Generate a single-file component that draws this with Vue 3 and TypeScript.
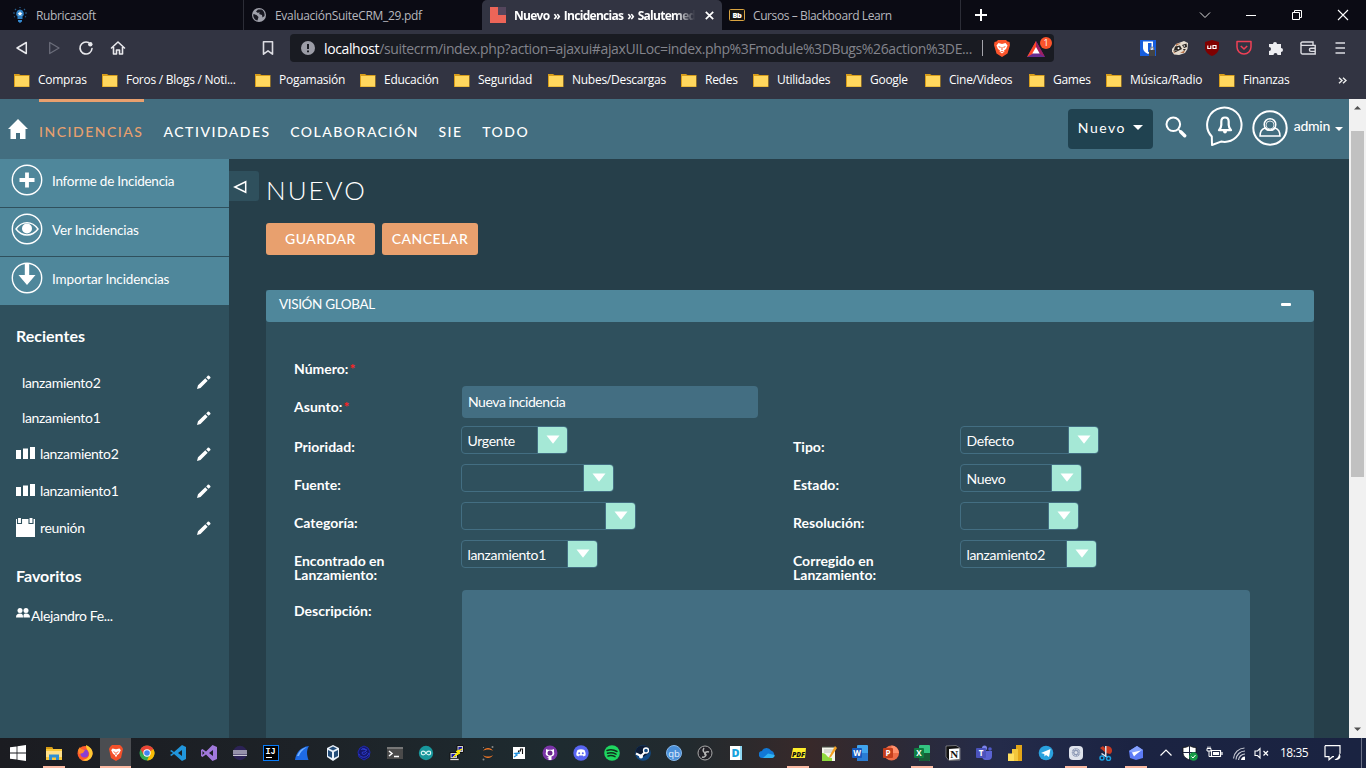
<script setup lang="ts">
interface Bookmark { name: string; w: number }
interface Recent { name: string; icon: string; h: number }
interface Field { label: string; value: string; w: number }
interface TaskIcon { id: string; art: string; state?: string; narrow?: boolean }

const bookmarks: Bookmark[] = [
  { name: 'Compras', w: 88 },
  { name: 'Foros / Blogs / Noti...', w: 153 },
  { name: 'Pogamasión', w: 105 },
  { name: 'Educación', w: 94 },
  { name: 'Seguridad', w: 94 },
  { name: 'Nubes/Descargas', w: 133 },
  { name: 'Redes', w: 72 },
  { name: 'Utilidades', w: 93 },
  { name: 'Google', w: 79 },
  { name: 'Cine/Videos', w: 104 },
  { name: 'Games', w: 77 },
  { name: 'Música/Radio', w: 113 },
  { name: 'Finanzas', w: 90 },
]

const recents: Recent[] = [
  { name: 'lanzamiento2', icon: '', h: 36 },
  { name: 'lanzamiento1', icon: '', h: 35 },
  { name: 'lanzamiento2', icon: 'bars', h: 37 },
  { name: 'lanzamiento1', icon: 'bars', h: 37 },
  { name: 'reunión', icon: 'cal', h: 37 },
]

const pairs: [Field, Field][] = [
  [{ label: 'Prioridad:', value: 'Urgente', w: 107 }, { label: 'Tipo:', value: 'Defecto', w: 139 }],
  [{ label: 'Fuente:', value: '', w: 153 }, { label: 'Estado:', value: 'Nuevo', w: 122 }],
  [{ label: 'Categoría:', value: '', w: 175 }, { label: 'Resolución:', value: '', w: 119 }],
  [{ label: 'Encontrado en Lanzamiento:', value: 'lanzamiento1', w: 137 }, { label: 'Corregido en Lanzamiento:', value: 'lanzamiento2', w: 137 }],
]

const office = (dark: string, mid: string, light: string, letter: string) =>
  `<rect x="5" y="0" width="11" height="16" rx="1" fill="${light}"/><path d="M5 8h11v7a1 1 0 0 1-1 1H6a1 1 0 0 1-1-1z" fill="${mid}"/><rect x="0" y="3" width="10" height="10" rx="1" fill="${dark}"/><text x="5" y="11" text-anchor="middle" font-family="Open Sans, sans-serif" font-weight="700" font-size="8" fill="#fff">${letter}</text>`

const tasks: TaskIcon[] = [
  { id: 'explorer', state: 'open', art: '<path d="M0 2h6l1 2h9v11H0z" fill="#f9c73a"/><path d="M0 2h6l1 2H0z" fill="#d69a14"/><path d="M0 6h16v6H0z" fill="#ffe08a"/><path d="M3 15V9.500h10V15h-3v-2.500H6V15z" fill="#2f8fd3"/>' },
  { id: 'firefox', art: '<circle cx="8" cy="8.500" r="7.500" fill="#ff5a2c"/><path d="M9 0c5 2 7.500 6 6.400 10C14 15 9 17 4.500 15 9 15 13 12 12 8 11.500 6 9 4 9 0z" fill="#ffc933"/><circle cx="7.500" cy="8.500" r="4" fill="#8a3fd6"/><path d="M1 5l2-3 1 2 4 1-2 3-4 1z" fill="#ff8a2a"/>' },
  { id: 'brave', state: 'active', art: '<path d="M4 0h8l2 2 1 2-2 9-5 3-5-3L1 4l1-2z" fill="#f4502a"/><path d="M4.500 3.500l3.500.8 3.500-.8 1.300 1.800-1.800 3.400-1.800 1.200L8 12.500l-1.200-2.600L5 8.700 3.200 5.300z" fill="#fff"/><path d="M5 6l2 1-.5 1zm6 0L9 7l.5 1zM7.500 7h1v3h-1z" fill="#f4502a"/>' },
  { id: 'chrome', art: '<circle cx="8" cy="8" r="7.500" fill="#34a853"/><path d="M1.500 4.200A7.500 7.500 0 0 1 14.500 4.200L8 8z" fill="#ea4335"/><path d="M14.500 4.200A7.500 7.500 0 0 1 8 15.500L11 9 8 4.200z" fill="#fbbc05"/><path d="M1.500 4.200 8 4.200 14.500 4.200 8 8 4.700 10z" fill="#ea4335"/><circle cx="8" cy="8" r="3.700" fill="#fff"/><circle cx="8" cy="8" r="2.800" fill="#4285f4"/>' },
  { id: 'code', art: '<path d="M12 0l4 2v12l-4 2-8-7-2.500 2L0 10l3-2-3-2 1.500-1L4 7zM12 5L8 8l4 3z" fill="#2196dc" fill-rule="evenodd"/>' },
  { id: 'vs', art: '<path d="M11.500 0L16 2v12l-4.500 2L5 9.500 1.500 12 0 11V5l1.500-1L5 6.500zM12 5L8 8l4 3zM1.500 6v4L3.500 8z" fill="#a179dc" fill-rule="evenodd"/>' },
  { id: 'eclipse', art: '<circle cx="8" cy="8" r="7.200" fill="#2c2255"/><path d="M1 5.500h14v1H1zm0 2h14v1.100H1zm0 2.200h14v1H1z" fill="#fff"/>' },
  { id: 'intellij', art: '<rect x=".5" y=".5" width="15" height="15" fill="#000" stroke="#087cfa"/><text x="2.500" y="9" font-family="Liberation Mono, monospace" font-weight="700" font-size="8.500" fill="#fff">IJ</text><path d="M3 12h6v1H3z" fill="#fff"/>' },
  { id: 'shark', art: '<path d="M1 15C2 8 6 2 15 1c-3 5-2 9-.5 14z" fill="#1d6ae5"/><path d="M3 11c2-5 5-8 10-9-5 3-7 6-8 9z" fill="#75b4ff"/>' },
  { id: 'vbox', art: '<path d="M8 0l6 3v9l-6 4-6-4V3z" fill="#e9f1fa"/><path d="M8 1.500l4 2-4 2-4-2zM3 5l4 2v6L3 11zm10 0L9 7v6l4-2z" fill="#234d79"/>' },
  { id: 'rose', art: '<path d="M8 1l4 2 2 4-1 5-5 3-5-3-1-5 2-4z" fill="#14176b" stroke="#2028b0"/><path d="M5 5c2-3 6-1 5 1s-4 0-4 2 4 2 5-1M3 9c1 4 8 5 10-1M6 4l5 1" fill="none" stroke="#3040d8" stroke-width=".9"/>' },
  { id: 'terminal', art: '<rect y="2" width="16" height="12" fill="#4a4a4a"/><path d="M0 2h16v2H0z" fill="#777"/><path d="M2 6l3 2.500L2 11M7 11.500h5" fill="none" stroke="#fff" stroke-width="1.500"/>' },
  { id: 'arduino', art: '<circle cx="8" cy="8" r="7.200" fill="#18979c"/><path d="M8 8C6.500 5.500 3.300 5.500 3.300 8s3.200 2.500 4.700 0 4.700-2.500 4.700 0S9.500 10.500 8 8z" fill="none" stroke="#d8f5f4" stroke-width="1.200"/>' },
  { id: 'putty', art: '<path d="M8 .5h6.500v7H8z" fill="#ccc" stroke="#111"/><path d="M1 7.500h7.500v6H1z" fill="#ccc" stroke="#111"/><path d="M9.500 2h3.500v3.500H9.500zM2.500 9h4v3h-4z" fill="#1a1ab0"/><path d="M1 13.500h9v2H1z" fill="#ddd" stroke="#111" stroke-width=".6"/><path d="M13 4L7 6.500l2 1L4 12l7-4-2-1z" fill="#ffee00" stroke="#ffee00"/>' },
  { id: 'jupyter', art: '<path d="M3 6c2-4 8-4 10 0-3-2-7-2-10 0zm0 4c2 4 8 4 10 0-3 2-7 2-10 0z" fill="#f37726"/><circle cx="12.500" cy="2" r="1" fill="#888"/><circle cx="3.500" cy="14.500" r="1" fill="#888"/><circle cx="3.500" cy="2.500" r=".6" fill="#888"/>' },
  { id: 'robot', art: '<rect x="2" y="2" width="12" height="12" fill="#fff"/><path d="M7.500 7.500V6h2V4h2v5" fill="none" stroke="#111" stroke-width="1.100"/><path d="M3 12l3-2-2-1.500 5-.5" fill="none" stroke="#1b90e0" stroke-width="1.300"/>' },
  { id: 'github', art: '<circle cx="8" cy="8" r="7.500" fill="#7b35a8"/><path d="M4 4l2 .8h4L12 4v3c1 3-1 4-2.500 4.500V15h-3v-2l-2-1 2 .2v-1C4 11 3 9 4 7z" fill="#fff"/><circle cx="8" cy="8" r="2.500" fill="#6a278e"/>' },
  { id: 'discord', art: '<circle cx="8" cy="8" r="7.700" fill="#5865f2"/><path d="M4.500 5c2-1 5-1 7 0 1 2 1.500 4 1 5.500L10.500 11.500 10 10.500H6l-.5 1-2-1C3 9 3.500 7 4.500 5z" fill="#fff"/><circle cx="6.200" cy="8.200" r="1" fill="#5865f2"/><circle cx="9.800" cy="8.200" r="1" fill="#5865f2"/>' },
  { id: 'spotify', art: '<circle cx="8" cy="8" r="7.800" fill="#1ed760"/><path d="M3 5.500c3-1 7-.7 10 1M3.500 8.300c3-.8 6-.5 8.500.8M4 11c2.500-.7 5-.4 7 .7" fill="none" stroke="#10301c" stroke-width="1.500" stroke-linecap="round"/>' },
  { id: 'steam', art: '<circle cx="8" cy="8" r="7.800" fill="#124b86"/><path d="M.5 6A7.800 7.800 0 0 1 15 5l-1 3-6 4-7-3z" fill="#0d1c36"/><path d="M1 8.500l5 2.500L10 7" stroke="#fff" stroke-width="2" fill="none"/><circle cx="11" cy="5.500" r="2.500" fill="#124b86" stroke="#fff" stroke-width="1.300"/><circle cx="6" cy="11.500" r="2" fill="#fff"/>' },
  { id: 'qb', art: '<circle cx="8" cy="8" r="7.500" fill="#4a8fd8" stroke="#88b9ea"/><text x="8" y="11.500" text-anchor="middle" font-family="Open Sans, sans-serif" font-size="9.500" fill="#e5f1ff">qb</text>' },
  { id: 'obs', art: '<circle cx="8" cy="8" r="7" fill="#222127" stroke="#a8a8a8"/><path d="M7 3c-2 3 0 5 2 5M12 7c-3-1-5 1-4 3M5 12c3 1 5-2 3-4" fill="none" stroke="#b4b4b4" stroke-width="1.500"/>' },
  { id: 'docs', art: '<path d="M3 1h11v14H3z" fill="#8fd7f2"/><path d="M2 1h10v14H2z" fill="#fff"/><text x="7.500" y="12" text-anchor="middle" font-family="Open Sans, sans-serif" font-weight="800" font-size="11" fill="#18a2dd">D</text>' },
  { id: 'onedrive', art: '<path d="M3.500 13A3.500 3.500 0 0 1 3 6a5 5 0 0 1 9-.5A4 4 0 0 1 13 13z" fill="#1278d4"/><path d="M4 13l5-4.500L15.700 10A3 3 0 0 1 13 13z" fill="#30b2f2"/>' },
  { id: 'pdf', state: 'open', art: '<path d="M3 3h13l-1 10H1z" fill="#ffee2a"/><text x="8.500" y="11.500" text-anchor="middle" font-family="Open Sans, sans-serif" font-style="italic" font-weight="800" font-size="7" fill="#111">PDF</text>' },
  { id: 'notepad', art: '<path d="M1 1h13v15H1z" fill="#f3f5ea"/><path d="M1 1h13v1.500H1z" fill="#3d3d38"/><path d="M3 5h9M3 7h8" stroke="#aaa" stroke-width=".7"/><path d="M1 8c5 0 4 5 10 5v3H1z" fill="#8fda3d"/><path d="M14 1l2 2-6 9-2 1 .5-2z" fill="#f5a021"/>' },
  { id: 'word', art: office('#185abd', '#2b7cd3', '#41a5ee', 'W') },
  { id: 'ppt', art: '<circle cx="8.500" cy="8" r="7.500" fill="#ed6c47"/><path d="M8.500 .5A7.500 7.500 0 0 1 16 8H8.500z" fill="#ff8f6b"/><rect y="3" width="10" height="10" rx="1" fill="#c43e1c"/><text x="5" y="11" text-anchor="middle" font-family="Open Sans, sans-serif" font-weight="700" font-size="8" fill="#fff">P</text>' },
  { id: 'excel', state: 'open', art: office('#107c41', '#185c37', '#33c481', 'X') },
  { id: 'notion', art: '<path d="M1 1l10-.5L15 3v12L4 15.500 1 12z" fill="#111" stroke="#aaa" stroke-width=".6"/><path d="M4 4l10.500-.7v11L4 15z" fill="#fff"/><text x="9.200" y="13" text-anchor="middle" font-family="Liberation Serif, serif" font-weight="700" font-size="11" fill="#111">N</text>' },
  { id: 'teams', art: '<circle cx="8.500" cy="3" r="2.500" fill="#7b83eb"/><circle cx="14" cy="4" r="1.800" fill="#5059c9"/><path d="M6 6h10v5a4 4 0 0 1-4 4H9a4 4 0 0 1-3-4z" fill="#5b63d3"/><rect y="3" width="10" height="10" rx="1" fill="#4b53bc"/><text x="5" y="11" text-anchor="middle" font-family="Open Sans, sans-serif" font-weight="700" font-size="8" fill="#fff">T</text>' },
  { id: 'powerbi', art: '<rect x="9" y="0" width="6" height="16" fill="#e3a618"/><rect x="5" y="4" width="6" height="12" fill="#f2c73c"/><rect x="1" y="8.500" width="6" height="7.500" fill="#ffdf5e"/>' },
  { id: 'telegram', art: '<circle cx="8" cy="8" r="7.300" fill="#2aa1de"/><path d="M3 8l9.500-4L11 12 8 10 6.500 11.500 6.300 9z" fill="#fff"/>' },
  { id: 'settings', state: 'open', narrow: true, art: '<rect x="1" y="1" width="14" height="14" rx="4" fill="#dfe3ec"/><circle cx="8" cy="7.500" r="4.200" fill="#8d99b5"/><circle cx="8" cy="7.500" r="3.200" fill="none" stroke="#dfe3ec" stroke-width="1" stroke-dasharray="1.500 1"/><circle cx="8" cy="7.500" r="1.500" fill="#dfe3ec"/>' },
  { id: 'snip', narrow: true, art: '<path d="M8 8L2 3l3-2 6 6zM8 1c6-1 8 6 4 8L8 8z" fill="#c83a22"/><path d="M7 1h1.500v10H7zM4 8l6 4-1 1-6-4z" fill="#dbe1ea"/><circle cx="4" cy="13" r="2" fill="none" stroke="#1aa0e0" stroke-width="1.500"/><circle cx="10.500" cy="13.500" r="2" fill="none" stroke="#1aa0e0" stroke-width="1.500"/>' },
  { id: 'mail', state: 'open', narrow: true, art: '<path d="M1 6l8-5 6 4v8L8 15l-6-2z" fill="#5d7bf6"/><path d="M1 6l8-5 6 4-8 4z" fill="#86a2ff"/><path d="M4 7.500l9-2-5 4-2 2z" fill="#fff"/>' },
]
</script>

<template>
  <div class="screen">
    <header class="tabs">
      <div class="tab first">
        <svg class="fav" viewBox="0 0 16 16"><path d="M8 2.500a4 4 0 0 1 2.500 7V12h-5V9.500A4 4 0 0 1 8 2.500z" fill="#2f80c4" /><path d="M6 13h4v1.500L8 16l-2-1.500z" fill="#3489cf" /><path d="M8 4.200l.8 1.500 1.600.3-1.200 1.200.3 1.600L8 8l-1.500.8.3-1.600L5.600 6l1.600-.3z" fill="#fff" /><path d="M8 0v1M1 6h2M13 6h2M3 2l1 1M13 2l-1 1M2 10l1-.5M14 10l-1-.5" stroke="#28608f" stroke-width="1.200" /></svg>
        <span>Rubricasoft</span>
      </div>
      <div class="tab second">
        <svg class="fav" viewBox="0 0 16 16"><circle cx="8" cy="8" r="7" fill="#a0a1ab" /><path d="M2.500 7l3 1 2 2-1 3.500C3.500 13 1.500 10 2.500 7zM7 2.500L5 4.500l1.500 1.200L9 5.500 8 7l3 1 .5 2.500L13.500 9c.5-3-1-5.500-3-6.500z" fill="#191922" /></svg>
        <span>EvaluaciónSuiteCRM_29.pdf</span>
      </div>
      <div class="tab active">
        <svg class="fav" viewBox="0 0 16 16"><path d="M0 0h8v8h8v8H0z" fill="#ed6558" /><path d="M8 0h8v8H8z" fill="#55465d" /></svg>
        <span class="active-name">Nuevo » Incidencias » Salutemedi</span>
        <svg class="x" viewBox="0 0 9 9"><path d="M.8.8l7.400 7.400M8.200.8L.8 8.200" stroke="#fff" stroke-width="1.700" /></svg>
      </div>
      <div class="tab last">
        <svg class="fav" viewBox="0 0 16 16"><rect x=".5" y="2.500" width="15" height="11" rx="1" fill="#141414" stroke="#d9a441" /><text x="8" y="10.800" text-anchor="middle" font-family="Open Sans, sans-serif" font-weight="800" font-size="7.500" fill="#fff">Bb</text></svg>
        <span>Cursos – Blackboard Learn</span>
      </div>
      <svg class="plus" viewBox="0 0 12 12"><path d="M6 0v12M0 6h12" stroke="#fff" stroke-width="2" /></svg>
      <div class="win">
        <svg viewBox="0 0 12 12"><path d="M1 3.500l5 5 5-5" fill="none" stroke="#ddd" /></svg>
        <svg viewBox="0 0 12 12"><path d="M1 6.500h10" stroke="#fff" /></svg>
        <svg viewBox="0 0 12 12"><path d="M1.500 3.500h7v7h-7zM3.500 3.500v-2h7v7h-2" fill="none" stroke="#fff" /></svg>
        <svg viewBox="0 0 12 12"><path d="M1 1l10 10M11 1L1 11" stroke="#fff" stroke-width="1.100" /></svg>
      </div>
    </header>

    <div class="tools">
      <div class="navicons">
        <svg viewBox="0 0 16 16"><path d="M12.300 2.500v11L3 8z" fill="none" stroke="#e8e8ec" stroke-width="1.500" stroke-linejoin="round" /></svg>
        <svg viewBox="0 0 16 16"><path d="M3.700 2.500v11L13 8z" fill="none" stroke="#6a6c79" stroke-width="1.300" stroke-linejoin="round" /></svg>
        <svg viewBox="0 0 16 16"><path d="M10.500 2.500A6 6 0 1 0 14 8.500" fill="none" stroke="#e8e8ec" stroke-width="1.600" stroke-linecap="round" /><circle cx="12.300" cy="4.300" r="2.200" fill="#e8e8ec" /></svg>
        <svg viewBox="0 0 16 16"><path d="M1.500 8L8 2l6.500 6M3.500 7v7h3v-4h3v4h3V7" fill="none" stroke="#e8e8ec" stroke-width="1.600" stroke-linejoin="round" stroke-linecap="round" /></svg>
      </div>
      <svg class="mark" viewBox="0 0 16 16"><path d="M3.500 1.800h9v12.400L8 10.800l-4.500 3.400z" fill="none" stroke="#dcdce2" stroke-width="1.600" stroke-linejoin="round" /></svg>
      <div class="addr">
        <svg class="warn" viewBox="0 0 14 14"><circle cx="7" cy="7" r="7" fill="#9b9ca6" /><path d="M7 3v5M7 9.500v1.800" stroke="#191b22" stroke-width="2" /></svg>
        <div class="url"><b>localhost</b>/suitecrm/index.php?action=ajaxui#ajaxUILoc=index.php%3Fmodule%3DBugs%26action%3DE...</div>
        <i class="bar"></i>
        <svg class="lion" viewBox="0 0 16 17"><path d="M4 0h8l1.500 1.500 2 .5.500 3-2.500 8.500L8 17l-5.500-3.500L0 5l.5-3 2-.5z" fill="#fb542b" /><path d="M4.500 3L8 4l3.500-1L13.500 5.500 12 9l-2 1.500.5 1L8 13.500 5.500 11.500l.5-1L4 9 2.500 5.500z" fill="#fff" /><path d="M4 6l3 1-1 1zm8 0L9 7l1 1zM7.500 7h1v3h-1zM6 11h4l-2 1z" fill="#fb542b" /></svg>
        <div class="bat">
          <svg viewBox="0 0 18 16"><path d="M9 0l9 16H0z" fill="#662d91" /><path d="M9 0L0 16l6-3.500L9 7z" fill="#ff4724" /><path d="M9 0v7l3 5.500 6 3.500z" fill="#9e1f63" /><path d="M9 6l3.700 6.500H5.300z" fill="#fff" /></svg>
          <em>1</em>
        </div>
      </div>
      <div class="exts">
        <svg viewBox="0 0 16 16"><path d="M0 0h16v16H0z" fill="#175ddc" /><path d="M3 1.500h10V8c0 3-3 5-5 6-2-1-5-3-5-6z" fill="#fff" /><path d="M8 3h3.500v5c0 2-2 3.500-3.500 4.200z" fill="#175ddc" /><path d="M9 10h6v6H9z" fill="#444" /><path d="M10.500 10V8.500a1.500 1.500 0 0 1 3 0V10" fill="none" stroke="#888" stroke-width="1.200" /></svg>
        <svg viewBox="0 0 16 16"><path d="M0 9l4-5 4-1.500L12 1l4 2-.5 6-2.500 4-6 2-5-.5-2-3z" fill="#e6dccf" /><path d="M3 6.500l5-1 2 3.500-4 2-4-1zM10 5l4.500-1.500L15 7l-3 1z" fill="#2a2522" /><path d="M4 4l5-1-5 3zM8 13l5-3-1 3zM1 11l3 2H2z" fill="#b9774f" /><path d="M1 10l5 1.500L3 12zM11 9l3 0-2 2z" fill="#2a2522" /><circle cx="6.500" cy="8.200" r="1" fill="#fff" /><circle cx="12.300" cy="6" r=".8" fill="#fff" /></svg>
        <svg viewBox="0 0 16 16"><path d="M8 0l7 2v6c0 4-4 7-7 8-3-1-7-4-7-8V2z" fill="#800000" /><path d="M3.800 5.500v3h3v-3M9 5.500v3h3v-3z" fill="none" stroke="#fff" stroke-width="1.200" /></svg>
        <svg viewBox="0 0 16 16"><path d="M1 1.500h14V7a7 7 0 0 1-14 0z" fill="none" stroke="#ef4056" stroke-width="1.500" stroke-linejoin="round" /><path d="M4.800 6l3.200 3 3.200-3" fill="none" stroke="#ef4056" stroke-width="1.600" /></svg>
        <svg viewBox="0 0 16 16"><path d="M1 4h4a2 2 0 1 1 4 0h4v4a2 2 0 1 1 0 4v3H9.500a2 2 0 0 0-4 0H1v-4a2 2 0 1 0 0-4z" fill="#eeeef2" /></svg>
        <svg viewBox="0 0 16 16"><path d="M13 5V2H2.500a1.700 1.700 0 0 0 0 3.400h12.700V14H2.500A1.500 1.500 0 0 1 1 12.500v-9" fill="none" stroke="#dcdce2" stroke-width="1.400" /><path d="M15 8.200h-4a1.500 1.500 0 0 0 0 3.200h4" fill="none" stroke="#dcdce2" stroke-width="1.400" /></svg>
        <svg viewBox="0 0 16 16"><path d="M3.500 3h9.500M3.500 8h9.500M3.500 13h9.500" stroke="#dcdce2" stroke-width="1.600" /></svg>
      </div>
    </div>

    <nav class="marks">
      <div v-for="b in bookmarks" :key="b.name" class="bm" :style="{ width: b.w + 'px' }">
        <svg viewBox="0 0 16 13"><path d="M0 0h5l1.500 1H15.500v12H0z" fill="#d79d1b" /><path d="M1 2h14v10.500H1z" fill="#ffd75e" /></svg>
        <span>{{ b.name }}</span>
      </div>
      <svg class="more" viewBox="0 0 9 7"><path d="M1 .7l3 2.800-3 2.800M5 .7l3 2.800-3 2.800" fill="none" stroke="#eee" stroke-width="1.400" /></svg>
    </nav>

    <div class="view">
      <div class="page">
        <div class="topnav">
          <svg class="home" viewBox="0 0 20 20"><path d="M10 0l10 10h-2.500v10H12v-6H8v6H2.500V10H0z" fill="#fff" /></svg>
          <a class="cur">INCIDENCIAS</a><a>ACTIVIDADES</a><a>COLABORACIÓN</a><a>SIE</a><a>TODO</a>
          <div class="right">
            <button class="create">Nuevo<i class="caret"></i></button>
            <svg class="search" viewBox="0 0 22 22"><circle cx="8.300" cy="8.300" r="6.800" fill="none" stroke="#fff" stroke-width="2" /><path d="M13.300 13.300l2 2" stroke="#fff" stroke-width="1.500" /><path d="M15.700 15.700l4 4" stroke="#fff" stroke-width="3.400" stroke-linecap="round" /></svg>
            <svg class="bell" viewBox="0 0 38 40"><path d="M5.800 30.500A17.200 17.200 0 1 1 15 35.600L6 39z" fill="none" stroke="#fff" stroke-width="2" stroke-linejoin="round" /><path d="M19 11.500c-2.600 0-3.700 2-3.700 4.200V19c0 2-.8 3.300-2.300 5.200h12c-1.500-1.900-2.300-3.200-2.300-5.200v-3.300c0-2.200-1.100-4.200-3.700-4.200z" fill="none" stroke="#fff" stroke-width="2.200" stroke-linejoin="round" /><circle cx="19" cy="25.500" r="1.900" fill="#fff" /></svg>
            <svg class="user" viewBox="0 0 36 36"><circle cx="18" cy="18" r="16.700" fill="none" stroke="#fff" stroke-width="2" /><circle cx="18" cy="14.500" r="5.800" fill="none" stroke="#fff" stroke-width="1.500" /><circle cx="18" cy="15" r="4" fill="none" stroke="#fff" stroke-width=".8" /><path d="M13 18c-3 1-5 3.500-5 8h20c0-4.500-2-7-5-8-2 3-8 3-10 0z" fill="none" stroke="#fff" stroke-width="1.500" /></svg>
            <span class="admin">admin</span><i class="caret small"></i>
          </div>
        </div>
        <div class="body">
          <aside class="side">
            <div class="act"><svg viewBox="0 0 32 32"><circle cx="16" cy="16" r="14.700" fill="none" stroke="#fff" stroke-width="1.400" /><path d="M16 8.500v15M8.500 16h15" stroke="#fff" stroke-width="3.800" /></svg><span class="tight">Informe de Incidencia</span></div>
            <div class="act"><svg viewBox="0 0 32 32"><circle cx="16" cy="16" r="14.700" fill="none" stroke="#fff" stroke-width="1.400" /><path d="M5 16c6-8.500 16-8.500 22 0-6 8-16 8-22 0z" fill="none" stroke="#fff" stroke-width="1.400" /><circle cx="16" cy="15.500" r="5" fill="#fff" /></svg><span>Ver Incidencias</span></div>
            <div class="act"><svg viewBox="0 0 32 32"><circle cx="16" cy="16" r="14.700" fill="none" stroke="#fff" stroke-width="1.400" /><path d="M13.800 1.500h4.400V13h6.300L16 23 7.500 13h6.300z" fill="#fff" /></svg><span>Importar Incidencias</span></div>
            <h3 class="rec">Recientes</h3>
            <div v-for="(r, i) in recents" :key="i" class="recent" :class="{ plain: !r.icon }" :style="{ height: r.h + 'px' }">
              <svg v-if="r.icon === 'bars'" class="ri" viewBox="0 0 19 19"><path d="M0 6h5v9H0zM7 4.500h5V15H7zM14 3h5v12h-5z" fill="#fff" /></svg>
              <svg v-if="r.icon === 'cal'" class="ri" viewBox="0 0 19 19"><path d="M0 1h19v18H0z" fill="#fff" /><path d="M1.500 0v5.500h4V0M13 0v5.500h4V0" fill="#fff" stroke="#2f505d" stroke-width="1.100" /></svg>
              <span>{{ r.name }}</span>
              <svg class="pen" viewBox="0 0 14 14"><path d="M0 14l1-3.700L8.300 3.300l2.400 2.400L3.500 13zM9.200 2.400L11 .5c.7-.5 3 1.600 2.500 2.500l-1.900 1.800z" fill="#fff" /></svg>
            </div>
            <h3 class="favs">Favoritos</h3>
            <div class="fava"><svg viewBox="0 0 14 10"><circle cx="4" cy="2.500" r="2.500" fill="#fff" /><circle cx="10" cy="2.500" r="2.500" fill="#fff" /><path d="M0 9.500C0 6.500 1.500 5.500 4 5.500s3 1 3 4zM7.500 9.500c0-3 0-4 2.500-4s4 1 4 4z" fill="#fff" /></svg><span>Alejandro Fe...</span></div>
          </aside>
          <div class="toggle"><svg viewBox="0 0 14 14"><path d="M12.700 1.800v10.400L1.800 7z" fill="none" stroke="#fff" stroke-width="1.500" /></svg></div>
          <main class="main">
            <h1>NUEVO</h1>
            <div class="btns"><button class="save">GUARDAR</button><button class="cancel">CANCELAR</button></div>
            <section class="panel">
              <div class="phead"><span>VISIÓN GLOBAL</span><i></i></div>
              <div class="form">
                <div class="row"><label>Número:<u>*</u></label></div>
                <div class="row asunto"><label>Asunto:<u>*</u></label><div class="input">Nueva incidencia</div></div>
                <div v-for="(p, i) in pairs" :key="i" class="row" :class="{ tall: i === 3 }">
                  <template v-for="f in p" :key="f.label">
                    <label>{{ f.label }}</label>
                    <div class="cell"><div class="select" :style="{ width: f.w + 'px' }"><span>{{ f.value }}</span><b><svg viewBox="0 0 14 9"><path d="M.5.500h13L7 8.700z" fill="#fff" /></svg></b></div></div>
                  </template>
                </div>
                <div class="row desc"><label>Descripción:</label><div class="area"></div></div>
              </div>
            </section>
          </main>
        </div>
      </div>
      <div class="scroll"><svg viewBox="0 0 17 17"><path d="M5 10.500h7L8.500 7z" fill="#505050" /></svg><i></i><svg viewBox="0 0 17 17"><path d="M5 6.500h7L8.500 10z" fill="#505050" /></svg></div>
    </div>

    <footer class="task">
      <div class="start"><svg viewBox="0 0 16 16"><path d="M0 2.300L6.600 1.400v6.200H0zM7.400 1.300L16 0v7.600H7.400zM0 8.400h6.600v6.200L0 13.700zM7.400 8.400H16V16l-8.600-1.200z" fill="#fff" /></svg></div>
      <div v-for="t in tasks" :key="t.id" class="ti" :class="[t.state, { narrow: t.narrow }]"><svg viewBox="0 0 16 16" v-html="t.art"></svg></div>
      <div class="tray">
        <svg class="t1" viewBox="0 0 14 16"><path d="M1.500 10.500L7 5l5.500 5.500" fill="none" stroke="#fff" stroke-width="1.200" /></svg>
        <svg class="t2" viewBox="0 0 16 16"><path d="M7.500.5c2 1.500 4 2 6.500 2v5c0 4-3 6-6.500 7.500C4 13.500 1 11.500 1 7.500v-5c2.500 0 4.500-.5 6.500-2z" fill="#fff" stroke="#111" stroke-width=".8" /><path d="M7.500 1v14M1 7.500h13" stroke="#1c2440" /><circle cx="11.500" cy="11.500" r="4.300" fill="#159a45" /><path d="M9.500 11.500l1.500 1.500 2.500-3" fill="none" stroke="#fff" /></svg>
        <svg class="t3" viewBox="0 0 17 16"><path d="M5.500 5.500h9v6h-9zM16 7v3" fill="none" stroke="#fff" stroke-width="1.200" /><path d="M7 7h6v3H7z" fill="#fff" /><path d="M1 3.500V6h4V3.500zM3 6v5.500h2.500M2 1.500v2M4 1.500v2" fill="none" stroke="#fff" /></svg>
        <svg class="t4" viewBox="0 0 14 16"><path d="M1.500 13.500A11.500 11.500 0 0 1 12.500 3M4 14.500A9 9 0 0 1 13 6M6.500 15a6.500 6.500 0 0 1 6.500-6" fill="none" stroke="#c6c9d3" stroke-width="1.200" /><path d="M9 15a4 4 0 0 1 4-3.500V15z" fill="#fff" /></svg>
        <svg class="t5" viewBox="0 0 15 16"><path d="M1 6h2.500L6 3.500v9.500L3.500 10.500H1z" fill="none" stroke="#fff" stroke-width="1.100" /><path d="M9.500 6l4.500 4.500M14 6L9.500 10.500" stroke="#fff" stroke-width="1.200" /></svg>
        <span>18:35</span>
        <svg class="t6" viewBox="0 0 17 16"><path d="M1 .7h15v8M1 .7v11h4v3l3.500-3H10" fill="none" stroke="#fff" stroke-width="1.200" /><path d="M15 8.500c0 3-1.500 5-4.500 6 2 1.200 5 .3 5.800-2 .4-1.500-.2-3-1.300-4z" fill="#fff" /></svg>
      </div>
    </footer>
  </div>
</template>

<style>
body { margin: 0; overflow: hidden; }
</style>

<style scoped>
* { box-sizing: border-box; }
svg { display: block; flex: none; }
.screen { width: 1366px; height: 768px; display: flex; flex-direction: column; font-family: "Open Sans", "Noto Sans", sans-serif; font-size: 12px; background: #323442; color: #fff; overflow: hidden; white-space: nowrap; }
.tabs { height: 30px; flex: none; background: #0b0b14; display: flex; align-items: center; letter-spacing: -.35px; color: #b7b8be; }
.tab { height: 30px; display: flex; align-items: center; }
.fav { width: 16px; height: 16px; }
.first { width: 244px; padding-left: 12px; gap: 8px; border-right: 1px solid #2c2d37; }
.second { width: 238px; padding-left: 7px; gap: 8px; letter-spacing: -.3px; }
.tab.active { width: 240px; padding-left: 8px; gap: 8px; background: #323442; border-radius: 5px 5px 0 0; color: #fff; font-weight: 700; }
.active-name { width: 183px; word-spacing: 1.500px; letter-spacing: -.72px; -webkit-mask-image: linear-gradient(90deg, #000 88%, transparent 99%); mask-image: linear-gradient(90deg, #000 88%, transparent 99%); }
.x { width: 9px; height: 9px; }
.last { width: 239px; padding-left: 7px; gap: 8px; border-right: 1px solid #2c2d37; letter-spacing: -.4px; }
.plus { width: 12px; height: 12px; margin-left: 14px; }
.win { margin-left: auto; display: flex; gap: 34px; padding-right: 17px; }
.win svg { width: 12px; height: 12px; }
.tools { height: 36px; flex: none; display: flex; align-items: center; }
.navicons { display: flex; gap: 16px; padding-left: 14px; }
.navicons svg { width: 16px; height: 16px; }
.mark { width: 16px; height: 16px; margin-left: 134px; }
.addr { width: 764px; height: 28px; margin-left: 14px; background: #191b22; border-radius: 4px; display: flex; align-items: center; }
.warn { width: 14px; height: 14px; margin-left: 11px; }
.url { width: 650px; margin-left: 9px; font-size: 14px; color: #83848c; letter-spacing: -.38px; }
.url b { font-weight: 400; color: #fff; }
.bar { width: 1px; height: 16px; background: #a5a5ac; margin-left: 8px; }
.lion { width: 16px; height: 17px; margin-left: 11px; }
.bat { width: 26px; height: 22px; margin-left: 17px; padding-top: 4px; position: relative; }
.bat svg { width: 18px; height: 16px; }
.bat em { position: absolute; left: 13px; top: 0; width: 12px; height: 12px; border-radius: 6px; background: #fb542b; font: 9px/12px "Open Sans", sans-serif; text-align: center; }
.exts { display: flex; gap: 16px; margin-left: 86px; }
.exts svg { width: 16px; height: 16px; }
.marks { height: 33px; flex: none; display: flex; align-items: center; padding: 0 0 5px 14px; letter-spacing: -.27px; }
.bm { display: flex; align-items: center; gap: 8px; flex: none; }
.bm span { margin-top: -2px; }
.bm svg { width: 16px; height: 13px; }
.more { width: 9px; height: 7px; margin-left: 29px; }
.view { height: 639px; flex: none; display: flex; font-family: Lato, sans-serif; }
.page { width: 1349px; height: 639px; background: #263f4a; overflow: hidden; }
.topnav { height: 60px; background: #436e80; display: flex; font-size: 14px; font-weight: 500; letter-spacing: 1.500px; padding-left: 8px; }
.home { width: 20px; height: 20px; margin-top: 20px; }
.topnav a { border-top: 3px solid transparent; padding-top: 21px; line-height: 18px; margin-right: 19.500px; }
.topnav .cur { color: #e8a06e; border-color: #e8a06e; margin-left: 11px; width: 105px; }
.right { margin-left: auto; display: flex; }
.create { width: 85px; height: 40px; margin-top: 10px; background: #204250; border: 0; border-radius: 4px; color: #fff; font: 14px Lato, sans-serif; letter-spacing: 1.500px; padding: 0 0 4px 10px; display: flex; align-items: center; gap: 7px; }
.caret { width: 0; height: 0; border: 5px solid transparent; border-top-color: #fff; border-bottom: 0; }
.search { width: 22px; height: 22px; margin: 17px 0 0 12px; }
.bell { width: 38px; height: 40px; margin: 7px 0 0 19px; }
.user { width: 36px; height: 36px; margin: 11px 0 0 8px; }
.admin { letter-spacing: -.3px; margin: 18px 0 0 6px; line-height: 18px; }
.small { border-width: 4px 4px 0; margin: 28px 6px 0 5px; }
.body { display: flex; height: 579px; align-items: flex-start; }
.side { width: 229px; height: 579px; background: #2f505d; font-size: 14px; flex: none; }
.act { height: 49px; background: #4f879b; border-bottom: 1px solid #2f505d; display: flex; padding: 5px 0 0 11px; font-size: 13.500px; letter-spacing: -.13px; }
.act svg { width: 32px; height: 32px; }
.act span { margin: 8px 0 0 9px; line-height: 18px; }
.act .tight { letter-spacing: -.25px; }
h3 { margin: 0; font-size: 16px; line-height: 20px; padding-left: 16px; }
.rec { margin: 20px 0 18px; }
.recent { display: flex; align-items: center; padding: 0 18px 0 16px; letter-spacing: -.33px; }
.recent span { margin-left: 5px; }
.plain span { margin-left: 6px; }
.ri { width: 19px; height: 19px; }
.pen { width: 14px; height: 14px; margin-left: auto; }
.favs { margin-top: 20px; }
.fava { display: flex; padding: 21px 0 0 16px; }
.fava svg { width: 14px; height: 10px; margin-top: 1px; }
.fava span { margin-left: 1px; line-height: 18px; letter-spacing: -.36px; }
.toggle { width: 30px; height: 30px; margin-top: 12px; background: #2f505d; border-radius: 0 3px 3px 0; padding: 9px 0 0 4px; flex: none; }
.toggle svg { width: 14px; height: 14px; }
.main { margin-left: 7px; padding-top: 16px; }
h1 { margin: 0; font-size: 26px; font-weight: 300; letter-spacing: 2px; line-height: 30px; }
.btns { display: flex; gap: 7px; margin-top: 18px; }
.btns button { height: 32px; border: 0; border-radius: 3px; background: #e8a06e; color: #fff; font: 500 14px Lato, sans-serif; letter-spacing: .5px; padding: 0 0 1px; }
.save { width: 109px; }
.cancel { width: 96px; }
.panel { width: 1048px; margin-top: 35px; background: #2f505d; }
.phead { height: 32px; background: #4f879b; border-radius: 3px; display: flex; padding: 5px 23px 0 13px; font-size: 13.500px; letter-spacing: -.35px; line-height: 18px; justify-content: space-between; }
.phead i { width: 10px; height: 3px; background: #fff; margin-top: 8px; border-radius: 1px; }
.form { padding: 26px 0 0 28px; font-size: 14px; height: 430px; }
.row { display: flex; height: 38px; align-items: flex-start; }
.row label { width: 120px; margin-right: 47px; padding-top: 14px; line-height: 14px; font-weight: 700; font-size: 14px; white-space: normal; flex: none; }
.row u { color: #f22; text-decoration: none; margin-left: 1px; }
.asunto { height: 40px; }
.tall { height: 50px; }
.cell { width: 332px; }
.input { width: 296px; height: 32px; margin-left: 1px; border-radius: 4px; background: #436e82; line-height: 32px; padding-left: 6px; letter-spacing: -.45px; }
.area { width: 788px; height: 190px; margin-left: 1px; border-radius: 4px; background: #436e82; }
.select { height: 28px; border: 1px solid #436e82; border-radius: 4px; display: flex; justify-content: space-between; overflow: hidden; letter-spacing: -.33px; }
.select span { padding-left: 5.500px; line-height: 28px; }
.select b { width: 30px; border-left: 1px solid #436e82; background: #a5e8d6; padding: 8px 0 0 8px; }
.select b svg { width: 14px; height: 9px; }
.scroll { width: 17px; background: #f1f1f1; display: flex; flex-direction: column; }
.scroll svg { width: 17px; height: 17px; }
.scroll i { width: 13px; height: 346px; background: #c1c1c1; margin: 15px 2px auto; }
.task { height: 30px; flex: none; display: flex; background: linear-gradient(90deg, #1b1c21 0, #1d2227 300px, #1e2b30 560px, #222a2e 690px, #38292a 810px, #2d2a35 890px, #242b4a 1000px, #1b2342 1130px, #1a2341 1366px); }
.start { width: 38px; padding: 7px 0 0 10px; }
.start svg, .ti svg { width: 16px; height: 16px; }
.ti { width: 31px; height: 30px; padding: 7px 0 0 8px; flex: none; }
.ti.narrow { width: 30px; padding-left: 7px; }
.ti.open { background: linear-gradient(#fbb9a2, #fbb9a2) 50% 100% / 22px 2px no-repeat; }
.ti.active { background: linear-gradient(#fbb9a2, #fbb9a2) 0 100% / 100% 2px no-repeat #4b4d51; }
.tray { flex: 1; display: flex; margin-left: 8px; padding-top: 7px; height: 30px; }
.tray::after { content: ""; width: 1px; height: 30px; margin: -7px 4px 0 auto; background: #6b7187; }
.tray svg { height: 16px; }
.tray span { line-height: 16px; letter-spacing: -.5px; margin-left: 11px; width: 28px; }
.t1 { width: 14px; }
.t2 { width: 16px; margin-left: 9px; }
.t3 { width: 17px; margin-left: 8px; }
.t4 { width: 14px; margin-left: 9px; }
.t5 { width: 15px; margin-left: 8px; }
.t6 { width: 17px; margin-left: 16px; }
</style>
